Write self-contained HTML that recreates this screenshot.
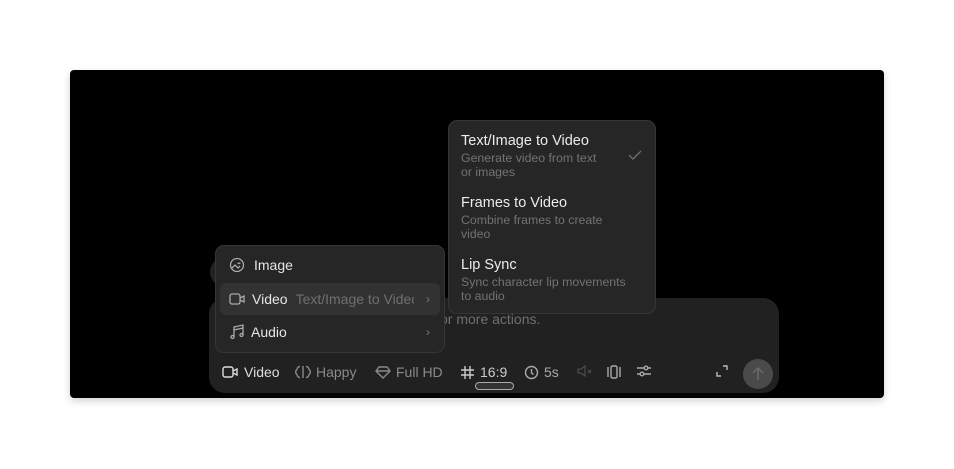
<!DOCTYPE html>
<html><head><meta charset="utf-8"><style>
*{box-sizing:border-box;margin:0;padding:0}
body{width:954px;height:469px;background:#fff;font-family:"Liberation Sans",sans-serif;position:relative;overflow:hidden}
.panel{position:absolute;left:70px;top:70px;width:814px;height:328px;background:#000;border-radius:4px;box-shadow:0 3px 8px rgba(0,0,0,.18)}
.bubble{position:absolute;left:210px;top:257px;width:40px;height:30px;border-radius:15px;background:#222}
.comp{position:absolute;left:209px;top:298px;width:570px;height:95px;background:#212121;border-radius:16px}
.ph{position:absolute;left:440px;top:311px;color:#6f6f6f;font-size:14px}
.bar{position:absolute;top:364px;font-size:14px;color:#8a8a8a;display:flex;align-items:center;gap:5px}
.bar svg{stroke:currentColor;fill:none;stroke-width:1.4}
.menu{position:absolute;background:#262626;border:1px solid #363636;border-radius:9px}
.m1{left:215px;top:245px;width:230px;height:108px}
.row{position:absolute;left:4px;right:4px;height:32px;border-radius:6px;display:flex;align-items:center;font-size:14px;color:#e6e6e6;padding-left:9px;gap:6px}
.row svg{stroke:#aaa;fill:none;stroke-width:1.3}
.sel{background:#323232}
.chev{position:absolute;right:10px;color:#777;font-size:12px}
.m2{left:448px;top:120px;width:208px;height:194px}
.t{position:absolute;left:12px;font-size:14.5px;color:#ececec}
.d{position:absolute;left:12px;font-size:12.3px;color:#737373;line-height:14px;width:180px}
.send{position:absolute;left:743px;top:359px;width:30px;height:30px;border-radius:50%;background:#4a4a4a}
</style></head><body>
<div class="panel"></div>
<div class="bubble"></div>
<div class="comp"></div>
<div class="ph">or more actions.</div>
<div class="bar" style="left:222px;color:#ddd"><svg width="17" height="14" viewBox="0 0 17 14"><rect x="1" y="2" width="10" height="10" rx="2"/><path d="M11 6l4-2v6l-4-2"/></svg>Video</div>
<div class="bar" style="left:295px"><svg width="16" height="16" viewBox="0 0 16 16"><path d="M8 2v12M5 2.5a3 3 0 00-3 3 3 3 0 000 5 3 3 0 003 3M11 2.5a3 3 0 013 3 3 3 0 010 5 3 3 0 01-3 3"/></svg>Happy</div>
<div class="bar" style="left:375px"><svg width="16" height="14" viewBox="0 0 16 14"><path d="M4 2h8l3 4-7 7-7-7zM1 6h14"/></svg>Full HD</div>
<div class="bar" style="left:460px;color:#ccc"><svg width="15" height="15" viewBox="0 0 15 15"><path d="M5 1v13M10 1v13M1 5h13M1 10h13"/></svg>16:9</div>
<div style="position:absolute;left:475px;top:382px;width:39px;height:8px;border:1px solid #aaa;border-radius:4px;background:#333"></div>
<div class="bar" style="left:524px;color:#aaa"><svg width="15" height="15" viewBox="0 0 15 15"><circle cx="7.5" cy="7.5" r="6"/><path d="M7.5 4v4l2 1.5"/></svg>5s</div>
<div class="bar" style="left:576px;color:#555"><svg width="18" height="14" viewBox="0 0 18 14"><path d="M2 5h3l4-3v10l-4-3H2zM12 6l3 3M15 6l-3 3" stroke-width="1"/></svg></div>
<div class="bar" style="left:605px;color:#aaa"><svg width="18" height="16" viewBox="0 0 18 16"><rect x="6" y="2" width="6" height="12" rx="1.5"/><path d="M3 3v10M15 3v10"/></svg></div>
<div class="bar" style="left:636px;color:#aaa"><svg width="16" height="14" viewBox="0 0 16 14"><path d="M1 4h14M1 10h14"/><circle cx="10" cy="4" r="1.8" fill="#212121"/><circle cx="6" cy="10" r="1.8" fill="#212121"/></svg></div>
<div class="bar" style="left:715px;color:#bbb"><svg width="14" height="14" viewBox="0 0 14 14"><path d="M2 8v4h4M12 6V2H8"/></svg></div>
<div class="send"><svg width="30" height="30" viewBox="0 0 30 30" style="stroke:#6a6a6a;fill:none;stroke-width:1.5"><path d="M15 21V9M10 14l5-5 5 5"/></svg></div>

<div class="menu m1">
<div class="row" style="top:3px;gap:9px;padding-left:9px"><svg width="16" height="16" viewBox="0 0 16 16"><circle cx="8" cy="8" r="6.5"/><path d="M3 11l3-3 3 3 2-2M9 5.5a1 1 0 102 0"/></svg>Image</div>
<div class="row sel" style="top:37px"><svg width="17" height="14" viewBox="0 0 17 14"><rect x="1" y="2" width="10" height="10" rx="2"/><path d="M11 6l4-2v6l-4-2"/></svg>Video <span style="color:#6f6f6f;margin-left:2px;white-space:nowrap;overflow:hidden;width:118px">Text/Image to Video</span><span class="chev">›</span></div>
<div class="row" style="top:70px"><svg width="16" height="16" viewBox="0 0 16 16"><path d="M5 13V3l9-2v10"/><circle cx="3.5" cy="13" r="1.5"/><circle cx="12.5" cy="11" r="1.5"/><path d="M5 6l9-2"/></svg>Audio<span class="chev">›</span></div>
</div>

<div class="menu m2">
<div class="t" style="top:12px">Text/Image to Video</div>
<div class="d" style="top:30px">Generate video from text<br>or images</div>
<svg style="position:absolute;left:179px;top:28px" width="14" height="12" viewBox="0 0 14 12"><path d="M1 6l4 4 8-8" stroke="#777" fill="none" stroke-width="1.2"/></svg>
<div class="t" style="top:74px">Frames to Video</div>
<div class="d" style="top:92px">Combine frames to create<br>video</div>
<div class="t" style="top:136px">Lip Sync</div>
<div class="d" style="top:154px">Sync character lip movements<br>to audio</div>
</div>
</body></html>
